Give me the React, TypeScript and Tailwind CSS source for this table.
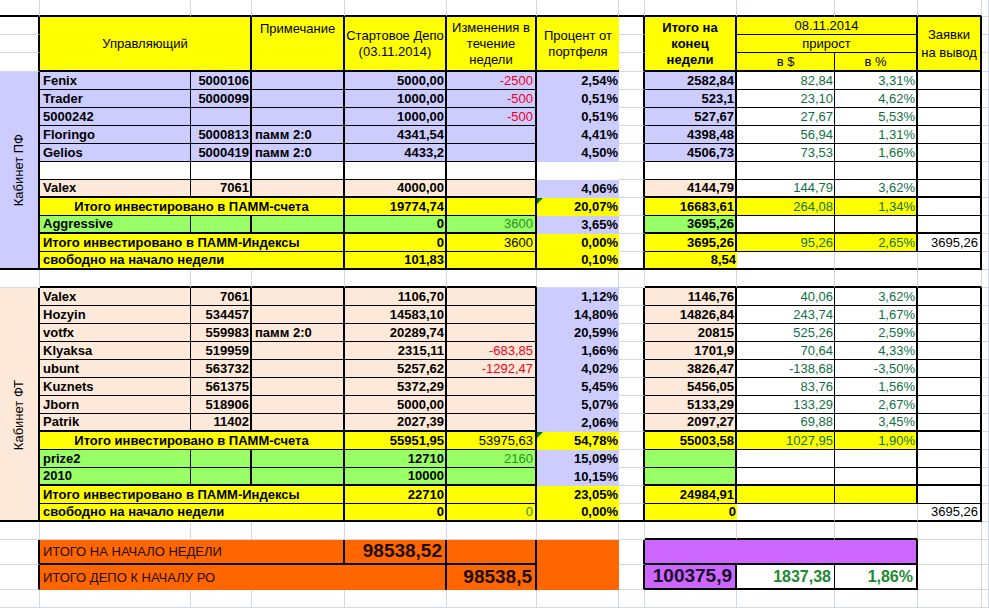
import clsx from 'clsx';
import type { ReactNode } from 'react';

type Line = 'g' | 'n' | '1' | '2';

const RIGHT: Record<Line, string> = {
  g: 'border-r border-r-[#d0d7e5]',
  n: '',
  '1': 'border-r border-r-black',
  '2': 'border-r-2 border-r-black',
};
const BOTTOM: Record<Line, string> = {
  g: 'border-b border-b-[#d0d7e5]',
  n: '',
  '1': 'border-b border-b-black',
  '2': 'border-b-2 border-b-black',
};

const LAV = 'bg-[#ccccff]';
const PEA = 'bg-[#fde9d9]';
const YEL = 'bg-[#ffff00]';
const GRN = 'bg-[#99ff66]';
const ORG = 'bg-[#ff6600]';
const PUR = 'bg-[#cc66ff]';

const NUM = 'justify-end pr-[1px] font-bold';
const NAME = 'pl-[3px] font-bold';
const GREEN = 'justify-end pr-[1px] text-[#10703f]';
const RED = 'text-[#f00020]';
const FGREEN = 'text-[#259225]';
const HEAD = 'row-span-3 justify-center text-center leading-[16px]';

function Cell({ r = 'g', b = 'g', className, children }: { r?: Line; b?: Line; className?: string; children?: ReactNode }) {
  return (
    <div className={clsx('relative flex min-w-0 items-center overflow-hidden whitespace-nowrap', RIGHT[r], BOTTOM[b], className)}>
      {children}
    </div>
  );
}

function Tri() {
  return <span className="absolute left-0 top-0 border-t-[6px] border-r-[6px] border-t-[#008000] border-r-transparent" />;
}

type Row = {
  bg?: string;
  name?: string;
  acc?: string;
  note?: string;
  title?: string;
  center?: boolean;
  dep?: string;
  chg?: string;
  chgCls?: string;
  pct?: string;
  gBg?: string;
  tri?: boolean;
  end?: string;
  iBg?: string;
  d?: string;
  p?: string;
  jkBg?: string;
  l?: string;
  b: Line;
  open?: boolean;
  last?: boolean;
};

function DataRow({ row }: { row: Row }) {
  const b = row.b;
  return (
    <>
      {row.title ? (
        <Cell r="2" b={b} className={clsx('col-span-3 font-bold', row.bg, row.center ? 'justify-center' : 'pl-[3px]')}>
          {row.title}
        </Cell>
      ) : (
        <>
          <Cell r="1" b={b} className={clsx(NAME, row.bg)}>{row.name}</Cell>
          <Cell r="2" b={b} className={clsx(NUM, row.bg)}>{row.acc}</Cell>
          <Cell r="2" b={b} className={clsx(NAME, row.bg)}>{row.note}</Cell>
        </>
      )}
      <Cell r="2" b={b} className={clsx(NUM, row.bg)}>{row.dep}</Cell>
      <Cell r="2" b={b} className={clsx('justify-end pr-[2px]', row.chgCls, row.bg)}>{row.chg}</Cell>
      <Cell r="n" b={row.last ? '2' : 'n'} className={clsx(NUM, row.gBg)}>
        {row.tri && <Tri />}
        {row.pct}
      </Cell>
      <Cell r="2" b={row.last ? '2' : 'g'} />
      <Cell r={row.open ? 'n' : '2'} b={b} className={clsx(NUM, row.iBg)}>{row.end}</Cell>
      <Cell r={row.open ? 'g' : '1'} b={b} className={clsx(GREEN, row.jkBg)}>{row.d}</Cell>
      <Cell r={row.open ? 'g' : '2'} b={b} className={clsx(GREEN, row.jkBg)}>{row.p}</Cell>
      <Cell r="2" b={b} className="justify-end pr-[2px]">{row.l}</Cell>
      <Cell />
    </>
  );
}

const pf: Row[] = [
  { bg: LAV, name: 'Fenix', acc: '5000106', dep: '5000,00', chg: '-2500', chgCls: RED, pct: '2,54%', gBg: LAV, end: '2582,84', iBg: LAV, d: '82,84', p: '3,31%', b: '1' },
  { bg: LAV, name: 'Trader', acc: '5000099', dep: '1000,00', chg: '-500', chgCls: RED, pct: '0,51%', gBg: LAV, end: '523,1', iBg: LAV, d: '23,10', p: '4,62%', b: '1' },
  { bg: LAV, name: '5000242', dep: '1000,00', chg: '-500', chgCls: RED, pct: '0,51%', gBg: LAV, end: '527,67', iBg: LAV, d: '27,67', p: '5,53%', b: '1' },
  { bg: LAV, name: 'Floringo', acc: '5000813', note: 'памм 2:0', dep: '4341,54', pct: '4,41%', gBg: LAV, end: '4398,48', iBg: LAV, d: '56,94', p: '1,31%', b: '1' },
  { bg: LAV, name: 'Gelios', acc: '5000419', note: 'памм 2:0', dep: '4433,2', pct: '4,50%', gBg: LAV, end: '4506,73', iBg: LAV, d: '73,53', p: '1,66%', b: '1' },
  { b: '1' },
  { bg: PEA, name: 'Valex', acc: '7061', dep: '4000,00', pct: '4,06%', gBg: LAV, end: '4144,79', iBg: PEA, d: '144,79', p: '3,62%', b: '2' },
  { bg: YEL, title: 'Итого инвестировано в ПАММ-счета', center: true, dep: '19774,74', pct: '20,07%', gBg: YEL, tri: true, end: '16683,61', iBg: YEL, d: '264,08', p: '1,34%', jkBg: YEL, b: '1' },
  { bg: GRN, name: 'Aggressive', dep: '0', chg: '3600', chgCls: FGREEN, pct: '3,65%', gBg: LAV, end: '3695,26', iBg: GRN, b: '2' },
  { bg: YEL, title: 'Итого инвестировано в ПАММ-Индексы', dep: '0', chg: '3600', pct: '0,00%', gBg: YEL, end: '3695,26', iBg: YEL, d: '95,26', p: '2,65%', jkBg: YEL, l: '3695,26', b: '1' },
  { bg: YEL, title: 'свободно на начало недели', dep: '101,83', pct: '0,10%', gBg: YEL, end: '8,54', iBg: YEL, b: '2', open: true, last: true },
];

const ft: Row[] = [
  { bg: PEA, name: 'Valex', acc: '7061', dep: '1106,70', pct: '1,12%', gBg: LAV, end: '1146,76', iBg: PEA, d: '40,06', p: '3,62%', b: '1' },
  { bg: PEA, name: 'Hozyin', acc: '534457', dep: '14583,10', pct: '14,80%', gBg: LAV, end: '14826,84', iBg: PEA, d: '243,74', p: '1,67%', b: '1' },
  { bg: PEA, name: 'votfx', acc: '559983', note: 'памм 2:0', dep: '20289,74', pct: '20,59%', gBg: LAV, end: '20815', iBg: PEA, d: '525,26', p: '2,59%', b: '1' },
  { bg: PEA, name: 'Klyaksa', acc: '519959', dep: '2315,11', chg: '-683,85', chgCls: RED, pct: '1,66%', gBg: LAV, end: '1701,9', iBg: PEA, d: '70,64', p: '4,33%', b: '1' },
  { bg: PEA, name: 'ubunt', acc: '563732', dep: '5257,62', chg: '-1292,47', chgCls: RED, pct: '4,02%', gBg: LAV, end: '3826,47', iBg: PEA, d: '-138,68', p: '-3,50%', b: '1' },
  { bg: PEA, name: 'Kuznets', acc: '561375', dep: '5372,29', pct: '5,45%', gBg: LAV, end: '5456,05', iBg: PEA, d: '83,76', p: '1,56%', b: '1' },
  { bg: PEA, name: 'Jborn', acc: '518906', dep: '5000,00', pct: '5,07%', gBg: LAV, end: '5133,29', iBg: PEA, d: '133,29', p: '2,67%', b: '1' },
  { bg: PEA, name: 'Patrik', acc: '11402', dep: '2027,39', pct: '2,06%', gBg: LAV, end: '2097,27', iBg: PEA, d: '69,88', p: '3,45%', b: '2' },
  { bg: YEL, title: 'Итого инвестировано в ПАММ-счета', center: true, dep: '55951,95', chg: '53975,63', pct: '54,78%', gBg: YEL, tri: true, end: '55003,58', iBg: YEL, d: '1027,95', p: '1,90%', jkBg: YEL, b: '1' },
  { bg: GRN, name: 'prize2', dep: '12710', chg: '2160', chgCls: FGREEN, pct: '15,09%', gBg: LAV, iBg: GRN, b: '1' },
  { bg: GRN, name: '2010', dep: '10000', pct: '10,15%', gBg: LAV, iBg: GRN, b: '2' },
  { bg: YEL, title: 'Итого инвестировано в ПАММ-Индексы', dep: '22710', pct: '23,05%', gBg: YEL, end: '24984,91', iBg: YEL, jkBg: YEL, b: '1' },
  { bg: YEL, title: 'свободно на начало недели', dep: '0', chg: '0', chgCls: FGREEN, pct: '0,00%', gBg: YEL, end: '0', iBg: YEL, l: '3695,26', b: '2', open: true, last: true },
];

const cols = Array.from({ length: 13 }, (_, i) => i);

export default function App() {
  return (
    <div className="h-[608px] w-[989px] overflow-hidden bg-white font-['Liberation_Sans',Arial,sans-serif] text-[13px] text-black">
      <div className="grid grid-cols-[40px_151px_61px_93px_102px_90px_82px_26px_92px_98px_83px_64px_7px] grid-rows-[17px_18px_18px_19px_repeat(11,18px)_18px_repeat(13,18px)_18px_25px_25px_18px]">
        {/* top blank row */}
        {cols.map((i) => (
          <Cell key={`t${i}`} b={i < 12 ? '2' : 'g'} />
        ))}

        {/* header */}
        <Cell r="2" />
        <Cell r="2" b="2" className={clsx('col-span-2 row-span-3 justify-center', YEL)}>Управляющий</Cell>
        <Cell r="2" b="2" className={clsx('row-span-3 items-start justify-center pt-[2px]', YEL)}>Примечание</Cell>
        <Cell r="2" b="2" className={clsx(HEAD, YEL)}>
          <span>Стартовое Депо<br />(03.11.2014)</span>
        </Cell>
        <Cell r="2" b="2" className={clsx(HEAD, YEL)}>
          <span>Изменения в<br />течение<br />недели</span>
        </Cell>
        <Cell r="n" b="2" className={clsx(HEAD, YEL)}>
          <span>Процент от<br />портфеля</span>
        </Cell>
        <Cell r="2" />
        <Cell r="2" b="2" className={clsx(HEAD, 'font-bold', YEL)}>
          <span>Итого на<br />конец<br />недели</span>
        </Cell>
        <Cell r="2" b="1" className={clsx('col-span-2 justify-center', YEL)}>08.11.2014</Cell>
        <Cell r="2" b="2" className={clsx(HEAD, 'leading-[18px]', YEL)}>
          <span>Заявки<br />на вывод</span>
        </Cell>
        <Cell />

        <Cell r="2" />
        <Cell r="2" />
        <Cell r="2" b="1" className={clsx('col-span-2 justify-center', YEL)}>прирост</Cell>
        <Cell />

        <Cell r="2" />
        <Cell r="2" />
        <Cell r="1" b="2" className={clsx('justify-center', YEL)}>в $</Cell>
        <Cell r="2" b="2" className={clsx('justify-center', YEL)}>в %</Cell>
        <Cell />

        {/* Кабинет ПФ */}
        <Cell r="2" b="2" className={clsx('row-span-11 justify-center', LAV)}>
          <span className="rotate-180 [writing-mode:vertical-rl]">Кабинет ПФ</span>
        </Cell>
        {pf.map((row, i) => (
          <DataRow key={`pf${i}`} row={row} />
        ))}

        {/* gap */}
        {cols.map((i) => (
          <Cell key={`g${i}`} b={(i >= 1 && i <= 5) || (i >= 8 && i <= 11) ? '2' : 'g'} />
        ))}

        {/* Кабинет ФТ */}
        <Cell r="2" b="2" className={clsx('row-span-13 justify-center pt-[22px]', PEA)}>
          <span className="rotate-180 [writing-mode:vertical-rl]">Кабинет ФТ</span>
        </Cell>
        {ft.map((row, i) => (
          <DataRow key={`ft${i}`} row={row} />
        ))}

        {/* gap */}
        {cols.map((i) => (
          <Cell key={`h${i}`} b={i >= 8 && i <= 10 ? '2' : 'g'} />
        ))}

        {/* totals */}
        <Cell r="2" />
        <Cell r="2" b="2" className={clsx('col-span-3 pl-[3px] text-[#1a0d00]', ORG)}>ИТОГО НА НАЧАЛО НЕДЕЛИ</Cell>
        <Cell r="2" b="2" className={clsx('justify-end pr-[3px] text-[19px] font-bold text-[#1a0d00]', ORG)}>98538,52</Cell>
        <Cell r="2" b="2" className={ORG} />
        <Cell r="n" b="n" className={clsx('row-span-2', ORG)} />
        <Cell r="2" />
        <Cell r="2" b="2" className={clsx('col-span-3', PUR)} />
        <Cell />
        <Cell />

        <Cell r="2" />
        <Cell r="2" b="n" className={clsx('col-span-4 pl-[3px] text-[#1a0d00]', ORG)}>ИТОГО ДЕПО К НАЧАЛУ РО</Cell>
        <Cell r="2" b="n" className={clsx('justify-end pr-[3px] text-[19px] font-bold text-[#1a0d00]', ORG)}>98538,5</Cell>
        <Cell r="2" />
        <Cell r="2" b="2" className={clsx('justify-end pr-[3px] text-[19px] font-bold text-[#180c28]', PUR)}>100375,9</Cell>
        <Cell r="1" b="2" className="justify-end pr-[3px] text-[16px] font-bold text-[#1e8a2e]">1837,38</Cell>
        <Cell r="2" b="2" className="justify-end pr-[3px] text-[16px] font-bold text-[#1e8a2e]">1,86%</Cell>
        <Cell />
        <Cell />

        {cols.map((i) => (
          <Cell key={`z${i}`} />
        ))}
      </div>
    </div>
  );
}
